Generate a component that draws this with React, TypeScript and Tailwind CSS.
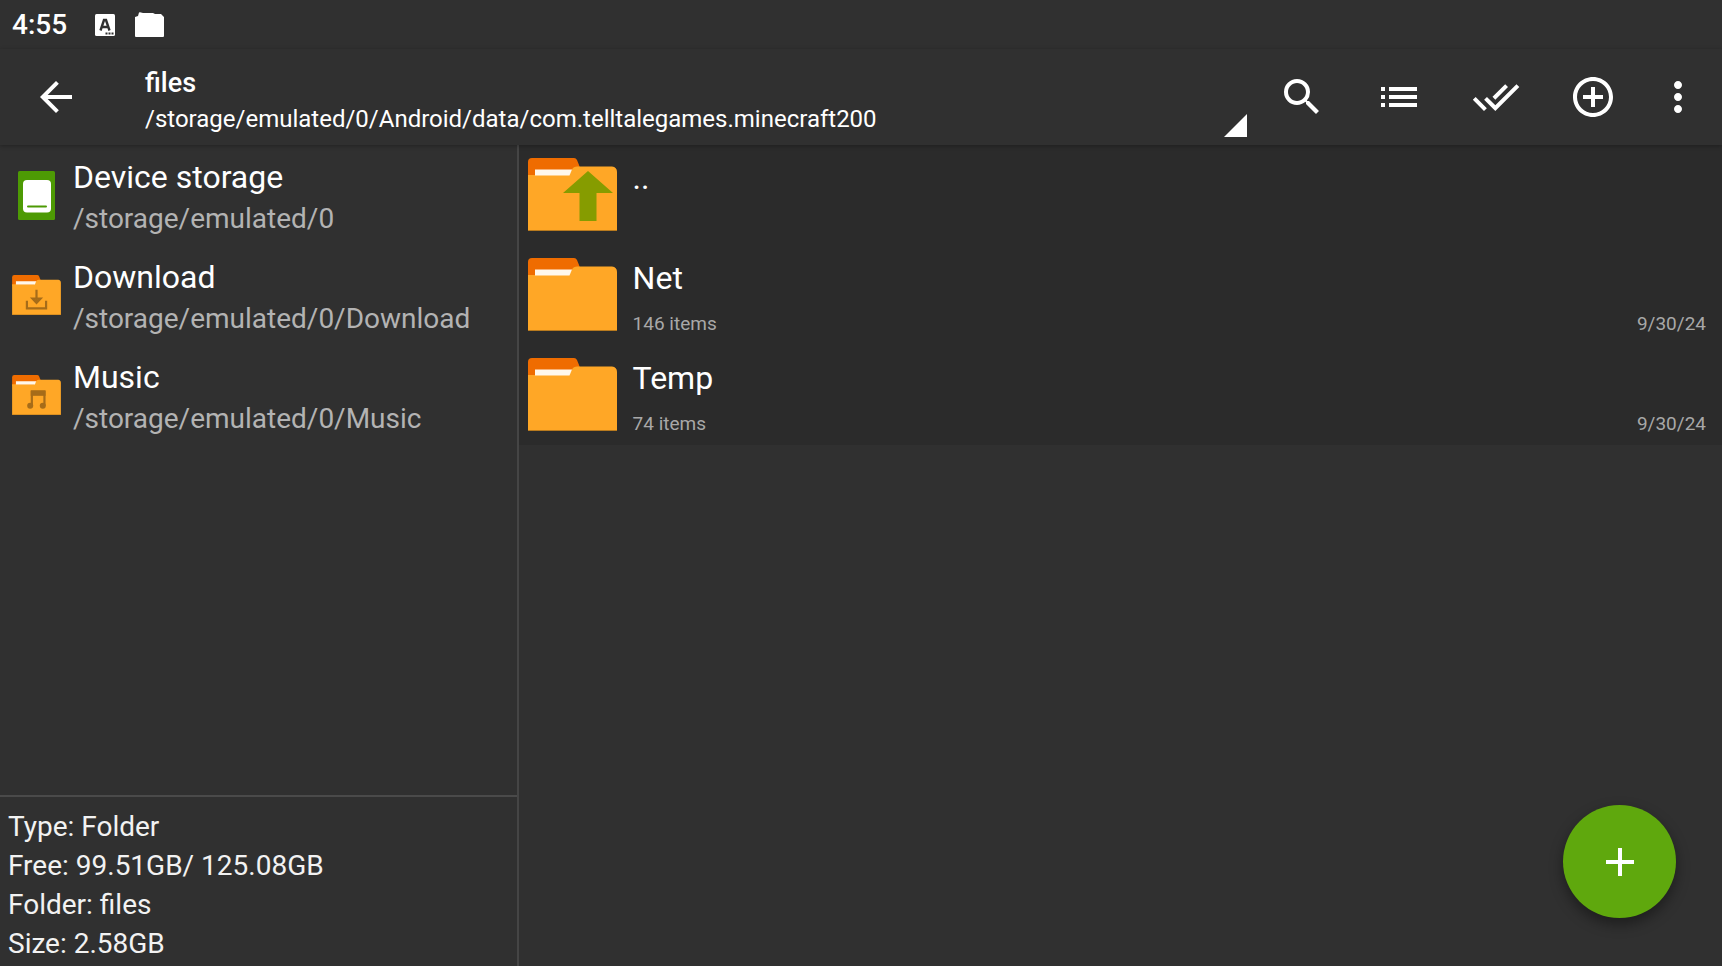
import type { ReactNode } from "react";
import {
  MdAdd,
  MdAddCircleOutline,
  MdArrowBack,
  MdDoneAll,
  MdList,
  MdMoreVert,
  MdSearch,
} from "react-icons/md";

function FolderIcon({ className, children }: { className: string; children?: ReactNode }) {
  return (
    <svg viewBox="0 0 89 73" className={className} aria-hidden="true">
      <path d="M0 20V4Q0 0 4 0H46Q48 0 49 2L53 12V20Z" fill="#ef6c00" />
      <path d="M0 17H40L45 10Q46 8.500 49 8.500H84Q89 9 89 14V73H0Z" fill="#ffa726" />
      <path d="M7 11.500H44L41.500 17.500H7Z" fill="#fff8ec" />
      <path d="M0 72H89V73H0Z" fill="#b87a1e" />
      {children}
    </svg>
  );
}

function DeviceIcon() {
  return (
    <svg viewBox="0 0 37 49" className="h-[49px] w-[37px]" aria-hidden="true">
      <rect width="37" height="49" rx="1.500" fill="#4d9a04" />
      <rect x="5" y="9" width="28" height="32.500" rx="4" fill="#fff" />
      <rect x="9" y="34.500" width="20" height="2" rx="1" fill="#4d9a04" />
    </svg>
  );
}

const places = [
  { name: "Device storage", path: "/storage/emulated/0", icon: <DeviceIcon /> },
  {
    name: "Download",
    path: "/storage/emulated/0/Download",
    icon: (
      <FolderIcon className="h-10 w-[49px]">
        <path
          d="M27 47V61H62V47M44.500 27V50M37 43L44.500 51L52 43Z"
          fill="none"
          stroke="#a66c19"
          strokeWidth="4"
        />
      </FolderIcon>
    ),
  },
  {
    name: "Music",
    path: "/storage/emulated/0/Music",
    icon: (
      <FolderIcon className="h-10 w-[49px]">
        <path d="M34 29H61V38H34Z" fill="#a66c19" />
        <path d="M36 56V30H59V56" fill="none" stroke="#a66c19" strokeWidth="4" />
        <circle cx="33" cy="56" r="5.500" fill="#a66c19" />
        <circle cx="56" cy="56" r="5.500" fill="#a66c19" />
      </FolderIcon>
    ),
  },
];

const entries = [
  { name: "..", up: true, items: "", date: "" },
  { name: "Net", up: false, items: "146 items", date: "9/30/24" },
  { name: "Temp", up: false, items: "74 items", date: "9/30/24" },
];

const details = ["Type: Folder", "Free: 99.51GB/ 125.08GB", "Folder: files", "Size: 2.58GB"];

const actions = [
  { label: "Search", Icon: MdSearch },
  { label: "View", Icon: MdList },
  { label: "Select all", Icon: MdDoneAll },
  { label: "New", Icon: MdAddCircleOutline },
];

function StatusBar() {
  return (
    <div className="flex h-[49px] items-center pl-3">
      <time className="w-[83px] pt-px text-[28px] leading-8 font-medium">4:55</time>
      <svg viewBox="0 0 20 22" className="h-[22px] w-5" aria-hidden="true">
        <rect width="20" height="22" rx="1.500" fill="#fff" />
        <path
          d="M5.500 16.500L9 6H11L14.500 16.500M7 13H13"
          fill="none"
          stroke="#303030"
          strokeWidth="2.400"
        />
        <path d="M10.500 18.500h2v2h-2zM13.500 18.500h2v2h-2zM16.500 18.500h2v2h-2z" fill="#303030" />
      </svg>
      <svg viewBox="0 0 30 25" className="ml-5 h-[25px] w-[30px]" aria-hidden="true">
        <path d="M0 5L3 4L4 0.500Q5 0 6 0.500L8 1H18L20 2H26L29 5V24Q29 25 28 25H1Q0 25 0 24Z" fill="#fff" />
      </svg>
    </div>
  );
}

function Toolbar() {
  return (
    <header className="z-10 flex h-24 items-center pr-2 shadow-[0_1px_4px_rgba(0,0,0,0.3)]">
      <button type="button" aria-label="Back" className="flex h-full w-28 items-center justify-center">
        <MdArrowBack className="size-12" />
      </button>
      <button type="button" className="flex h-full min-w-0 flex-1 items-end text-left">
        <span className="min-w-0 flex-1 pb-2 pl-[33px]">
          <span className="block text-[27px] leading-9 font-medium">files</span>
          <span className="block truncate text-2xl leading-9">
            /storage/emulated/0/Android/data/com.telltalegames.minecraft200
          </span>
        </span>
        <svg viewBox="0 0 23 23" className="mr-[6px] mb-2 size-[23px]" aria-hidden="true">
          <path d="M23 0V23H0Z" fill="#fff" />
        </svg>
      </button>
      {actions.map(({ label, Icon }) => (
        <button key={label} type="button" aria-label={label} className="flex h-full w-[97px] items-center justify-center">
          <Icon className="size-12" />
        </button>
      ))}
      <button type="button" aria-label="More options" className="flex h-full w-[73px] items-center justify-center">
        <MdMoreVert className="size-12" />
      </button>
    </header>
  );
}

export default function App() {
  return (
    <div className="flex h-screen flex-col bg-[#303030] font-[Roboto,sans-serif] text-white">
      <StatusBar />
      <Toolbar />
      <div className="flex min-h-0 flex-1">
        <aside className="flex w-[30%] flex-col">
          <nav className="flex-1">
            {places.map((place) => (
              <a key={place.name} href="#" className="flex h-[100px]">
                <span className="flex w-[73px] items-center justify-center">{place.icon}</span>
                <span className="pt-3">
                  <span className="block text-[32px] leading-10">{place.name}</span>
                  <span className="block text-[28px] leading-11 text-[#b3b3b3]">{place.path}</span>
                </span>
              </a>
            ))}
          </nav>
          <div className="border-t-2 border-[#4a4a4a] px-2 pt-[10px] pb-[3px] text-[28px] leading-[39px] text-[#f2f2f2]">
            {details.map((line) => (
              <p key={line}>{line}</p>
            ))}
          </div>
        </aside>
        <main className="relative flex-1 border-l-2 border-[#454545]">
          <ul className="bg-[#2b2b2b]">
            {entries.map((entry) => (
              <li key={entry.name}>
                <button type="button" className="flex h-[100px] w-full pr-4 pl-[9px] text-left">
                  <FolderIcon className="mt-[13px] h-[73px] w-[89px]">
                    {entry.up && <path d="M60 13L85 35H68.500V63H51.500V35H35Z" fill="#869c00" />}
                  </FolderIcon>
                  <span className="flex-1 pt-[13px] pl-4">
                    <span className="block text-[32px] leading-10">{entry.name}</span>
                    <span className="mt-[14px] flex justify-between text-[19px] leading-6 text-[#a8a8a8]">
                      <span>{entry.items}</span>
                      <span>{entry.date}</span>
                    </span>
                  </span>
                </button>
              </li>
            ))}
          </ul>
          <button
            type="button"
            aria-label="Add"
            className="absolute right-[46px] bottom-12 flex size-[113px] items-center justify-center rounded-full bg-[#5fa80d] shadow-[0_6px_14px_rgba(0,0,0,0.4)]"
          >
            <MdAdd className="size-12" />
          </button>
        </main>
      </div>
    </div>
  );
}
